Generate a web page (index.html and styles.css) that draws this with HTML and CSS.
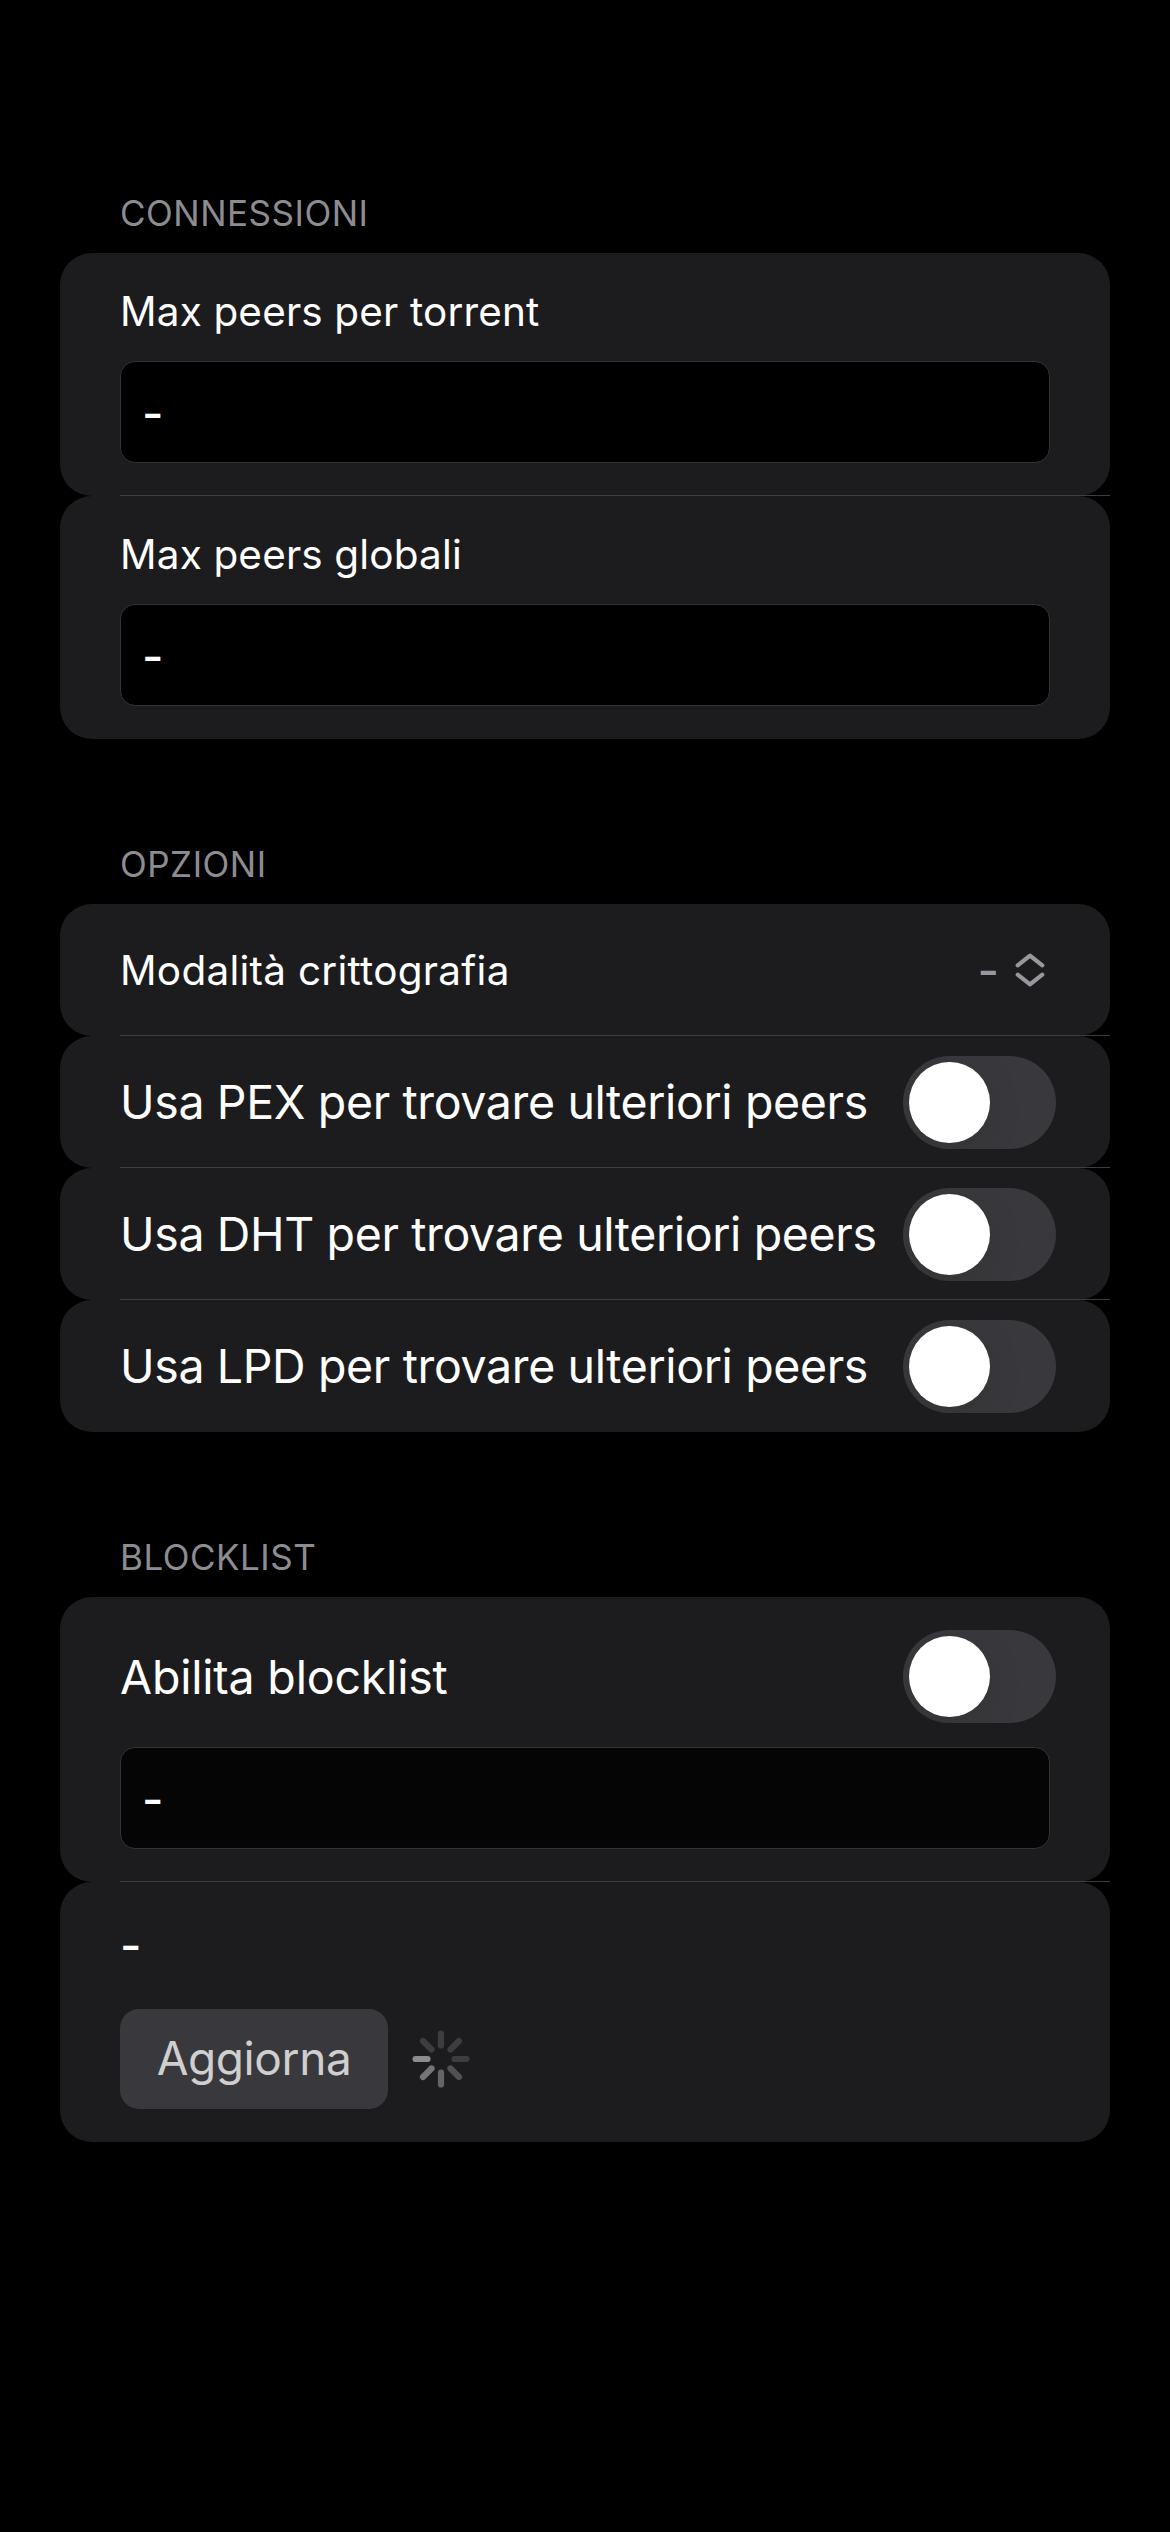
FILE: index.html
```html
<!DOCTYPE html>
<html lang="it">
<head>
<meta charset="utf-8">
<title>Impostazioni peers</title>
<link rel="stylesheet" href="styles.css">
</head>
<body>
<main class="settings">
  <section class="group">
    <h2 class="group-title">CONNESSIONI</h2>
    <div class="card stack">
      <span class="label">Max peers per torrent</span>
      <div class="field">-</div>
    </div>
    <div class="card stack">
      <span class="label">Max peers globali</span>
      <div class="field">-</div>
    </div>
  </section>

  <section class="group">
    <h2 class="group-title">OPZIONI</h2>
    <div class="card row">
      <span class="label crypto">Modalità crittografia</span>
      <span class="picker">-
        <svg class="chevrons" viewBox="0 0 30 34" width="30" height="34"><path d="M2.7 12.3 15 2.6l12.3 9.7M2.7 21.7 15 31.4l12.3-9.7"/></svg>
      </span>
    </div>
    <div class="card row">
      <span class="option">Usa PEX per trovare ulteriori peers</span>
      <span class="toggle"></span>
    </div>
    <div class="card row">
      <span class="option">Usa DHT per trovare ulteriori peers</span>
      <span class="toggle"></span>
    </div>
    <div class="card row">
      <span class="option">Usa LPD per trovare ulteriori peers</span>
      <span class="toggle"></span>
    </div>
  </section>

  <section class="group">
    <h2 class="group-title">BLOCKLIST</h2>
    <div class="card stack">
      <div class="toggle-line">
        <span class="option enable">Abilita blocklist</span>
        <span class="toggle"></span>
      </div>
      <div class="field disabled">-</div>
    </div>
    <div class="card stack">
      <div class="status">-</div>
      <div class="actions">
        <button class="button" type="button">Aggiorna</button>
        <svg class="spinner" viewBox="-29 -29 58 58" width="58" height="58">
          <path class="s1" d="M-13.5 0H-25.4"/>
          <path class="s2" d="M-9.5 9.5-18 18"/>
          <path class="s3" d="M0 13.5V25.4"/>
          <path class="s4" d="M9.5 9.5 18 18"/>
          <path class="s5" d="M13.5 0H25.4M9.5-9.5 18-18M0-13.5V-25.4M-9.5-9.5-18-18"/>
        </svg>
      </div>
    </div>
  </section>
</main>
</body>
</html>
```
FILE: styles.css
```css
* { box-sizing: border-box; }

body {
  margin: 0;
  background: #000;
  color: #fff;
  font-family: Inter, "Liberation Sans", sans-serif;
}

.settings { padding: 189px 60px 0; }

.group + .group { margin-top: 101px; }

.group-title {
  margin: 0;
  padding: 0 60px 16px;
  color: #8d8c92;
  font-size: 35px;
  font-weight: 400;
  letter-spacing: .5px;
  line-height: 48px;
}

.card {
  position: relative;
  padding: 33px 60px;
  border-radius: 32px;
  background: #1c1c1e;
}

.card:not(:last-child)::after {
  content: "";
  position: absolute;
  right: 0;
  bottom: 0;
  left: 60px;
  height: 1px;
  background: #3d3d40;
}

.stack {
  display: flex;
  flex-direction: column;
}

.row {
  display: flex;
  align-items: center;
  justify-content: space-between;
  height: 132px;
  padding-block: 0;
}

.label {
  font-size: 40.5px;
  letter-spacing: .15px;
  line-height: 52px;
}

.crypto {
  padding-top: 1px;
  letter-spacing: .26px;
}

.option, .status, .field, .picker {
  font-size: 46.5px;
  line-height: 60px;
  white-space: nowrap;
}

.status, .field, .picker { font-weight: 500; }

.option { letter-spacing: -.37px; }

.enable { letter-spacing: -.2px; }

.field {
  height: 102px;
  margin-top: 23px;
  padding: 21px 21px 19px;
  border: 1px solid #333335;
  border-radius: 15px;
  background: #000;
}

.field.disabled {
  margin-top: 24px;
  background: #050505;
}

.picker {
  display: flex;
  align-items: center;
  gap: 16px;
  margin-right: 5px;
  color: #98979e;
}

.chevrons {
  fill: none;
  stroke: currentColor;
  stroke-width: 4.2;
  stroke-linecap: round;
  stroke-linejoin: round;
}

.toggle {
  flex: none;
  width: 153px;
  height: 93px;
  margin-right: -6px;
  padding: 6px;
  overflow: hidden;
  border-radius: 47px;
  background: #39393d;
}

.toggle::before {
  content: "";
  display: block;
  width: 81px;
  height: 81px;
  border-radius: 50%;
  background: #fff;
  box-shadow: 0 9px 24px rgba(50, 50, 50, .5);
}

.toggle-line {
  display: flex;
  align-items: center;
  justify-content: space-between;
}

.status { height: 94px; }

.actions {
  display: flex;
  align-items: center;
  gap: 24px;
}

.button {
  width: 268px;
  height: 100px;
  padding: 0 0 2px;
  border: 0;
  border-radius: 19px;
  background: #39393d;
  color: #cfcfcf;
  font-family: inherit;
  font-size: 46px;
  letter-spacing: -.4px;
  line-height: 60px;
}

.spinner {
  fill: none;
  stroke-width: 6.2;
  stroke-linecap: round;
}

.s1 { stroke: #8b8b90; }
.s2 { stroke: #757579; }
.s3 { stroke: #646467; }
.s4 { stroke: #515154; }
.s5 { stroke: #3d3d41; }
```
